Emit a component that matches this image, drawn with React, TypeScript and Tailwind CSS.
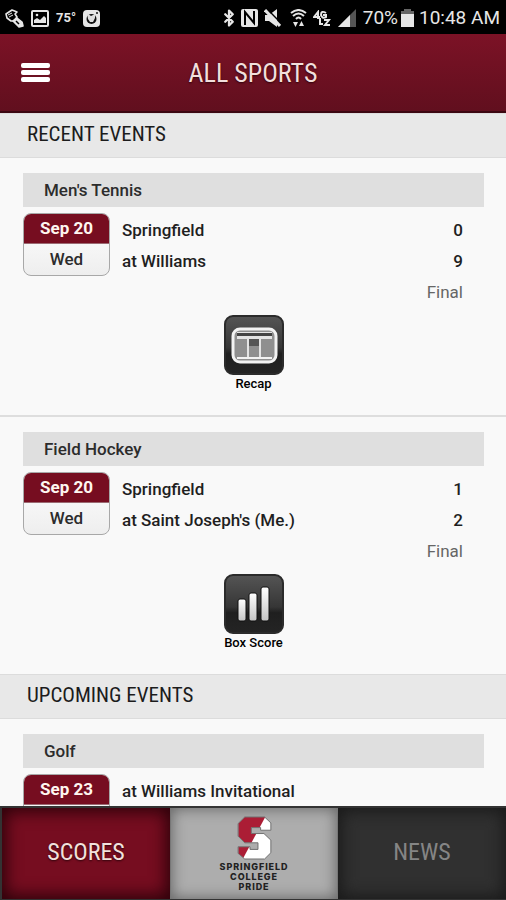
import React from 'react';
import { Bluetooth } from 'lucide-react';

type GameEvent = {
  sport: string;
  date: string;
  day?: string;
  rows: { team: string; score?: string }[];
  status?: string;
  action?: 'Recap' | 'Box Score';
};

const recent: GameEvent[] = [
  {
    sport: "Men's Tennis",
    date: 'Sep 20',
    day: 'Wed',
    rows: [
      { team: 'Springfield', score: '0' },
      { team: 'at Williams', score: '9' },
    ],
    status: 'Final',
    action: 'Recap',
  },
  {
    sport: 'Field Hockey',
    date: 'Sep 20',
    day: 'Wed',
    rows: [
      { team: 'Springfield', score: '1' },
      { team: "at Saint Joseph's (Me.)", score: '2' },
    ],
    status: 'Final',
    action: 'Box Score',
  },
];

const upcoming: GameEvent[] = [
  { sport: 'Golf', date: 'Sep 23', rows: [{ team: 'at Williams Invitational' }] },
];

const condensed = "font-['Roboto_Condensed','Liberation_Sans_Narrow',sans-serif]";

function StatusBar() {
  return (
    <div className="flex h-[34px] shrink-0 items-center justify-between bg-black pt-[2px] pr-[6px] pl-[5px] text-[#e6e6e6]">
      <div className="flex items-center gap-[7px]">
        <svg width="19" height="19" viewBox="0 0 19 19" fill="none" stroke="currentColor" strokeWidth="1.6" strokeLinejoin="round">
          <path d="M1 5 L7 1 L12 3 L10 5 L12 8 L9 12 L6 12 L2 9 Z" />
          <path d="M3 6 L7 4 M4 8 L8 6" strokeWidth="1" />
          <path d="M8 12 L12 9 L17 13 L18 17 L14 18 Z" fill="currentColor" />
          <path d="M11 12 L14 15" stroke="#000" strokeWidth="1.500" />
        </svg>
        <svg width="18" height="17" viewBox="0 0 18 17" fill="none" stroke="currentColor" strokeWidth="2">
          <rect x="1" y="1" width="16" height="15" rx="1" />
          <path d="M3 13 V10 L6 8 L9 10 L13 6 L15 8 V13 Z" fill="currentColor" stroke="none" />
          <circle cx="6" cy="5" r="1.3" fill="currentColor" stroke="none" />
        </svg>
        <span className="font-[Roboto] text-[13px] leading-4 font-bold">75°</span>
        <svg width="17" height="17" viewBox="0 0 17 17">
          <rect width="17" height="17" rx="4" fill="currentColor" />
          <circle cx="8.500" cy="9" r="5" fill="#111" />
          <path d="M4 3 L8 6 L12 4 L12 8 L10 12 H7 L5 9 Z" fill="#ddd" />
          <circle cx="14" cy="3" r="1" fill="#111" />
        </svg>
      </div>
      <div className="flex items-center">
        <Bluetooth size={18} strokeWidth={3} />
        <svg className="ml-[3px]" width="17" height="18" viewBox="0 0 17 18">
          <rect width="17" height="18" rx="2" fill="currentColor" />
          <path d="M4 16 V3 L13 14 V2" fill="none" stroke="#000" strokeWidth="2" />
        </svg>
        <svg className="ml-[6px]" width="17" height="18" viewBox="0 0 17 18">
          <path d="M1 6 H5 L13 0 V18 L5 12 H1 Z" fill="currentColor" />
          <path d="M3 0 L17 14" stroke="#000" strokeWidth="1.500" />
          <path d="M1 1 L16 17" stroke="currentColor" strokeWidth="3" />
        </svg>
        <svg className="ml-[9px]" width="17" height="18" viewBox="0 0 17 18" fill="none" stroke="currentColor" strokeWidth="2">
          <path d="M1 4 Q8.500 -2 16 4" />
          <path d="M3 7 Q8.500 2 14 7" />
          <path d="M6 10 Q8.500 7 11 10" />
          <path d="M3 13 L5.500 18 L8 13 Z M9 17 L11.500 12 L14 17 Z" fill="currentColor" stroke="none" />
        </svg>
        <svg className="ml-[6px]" width="18" height="16" viewBox="0 0 18 16" fill="none" stroke="currentColor" strokeWidth="2">
          <path d="M5 9 V2 L1 7 H7 M13 3 Q8 0 8 5 Q9 9 13 7 V5 H10" />
          <path d="M7 8 V14 H10 M11 10 H16 L12 15 H17" />
        </svg>
        <svg className="ml-[7px]" width="18" height="18" viewBox="0 0 18 18">
          <path d="M0 18 L18 0 V18 Z" fill="#555" />
          <path d="M0 18 L12 6 V18 Z" fill="currentColor" />
        </svg>
        <span className="ml-[7px] font-[Roboto] text-[19px] leading-6">70%</span>
        <svg className="ml-[3px]" width="13" height="18" viewBox="0 0 13 18">
          <path d="M3 0 H10 V2 H13 V5 H0 V2 H3 Z" fill="#666" />
          <rect y="5" width="13" height="13" fill="currentColor" />
        </svg>
        <span className="ml-[5px] font-[Roboto] text-[19px] leading-6 whitespace-nowrap">10:48 AM</span>
      </div>
    </div>
  );
}

function SectionTitle({ children }: { children: React.ReactNode }) {
  return (
    <h2
      className={`${condensed} h-[45px] border-y border-[#dcdcdc] bg-[#e8e8e8] pl-[27px] text-[21px] leading-[40px] text-[#1c1c1c]`}
    >
      {children}
    </h2>
  );
}

function ActionIcon({ kind }: { kind: 'Recap' | 'Box Score' }) {
  return (
    <svg width="60" height="60" viewBox="0 0 60 60">
      <defs>
        <linearGradient id="tile" x1="0" y1="0" x2="0" y2="1">
          <stop offset="0" stopColor="#555" />
          <stop offset="0.550" stopColor="#363636" />
          <stop offset="0.650" stopColor="#1f1f1f" />
          <stop offset="1" stopColor="#242424" />
        </linearGradient>
        <linearGradient id="glyph" x1="0" y1="0" x2="0" y2="1">
          <stop offset="0" stopColor="#fff" />
          <stop offset="1" stopColor="#c4c4c4" />
        </linearGradient>
      </defs>
      <rect x="1" y="1" width="58" height="58" rx="8" fill="url(#tile)" stroke="#2b2b2b" strokeWidth="2" />
      {kind === 'Recap' ? (
        <g>
          <rect x="9" y="14" width="43" height="33" rx="7" fill="#8f8f8f" stroke="#f2f2f2" strokeWidth="3" />
          <path d="M13 17 H48 V24 H13 Z M23 20 H25 V43 H23 Z M35 20 H37 V43 H35 Z" fill="#e4e4e4" />
          <rect x="13" y="18" width="35" height="3" fill="#444" />
          <rect x="25" y="24" width="10" height="7" fill="#555" />
          <path d="M13 43 H48" stroke="#f2f2f2" strokeWidth="2" />
        </g>
      ) : (
        <g fill="url(#glyph)" stroke="#111">
          <rect x="14" y="25" width="8" height="22" rx="2" />
          <rect x="25" y="19" width="8" height="28" rx="2" />
          <rect x="37" y="13" width="8" height="34" rx="2" />
        </g>
      )}
    </svg>
  );
}

function EventCard({ event }: { event: GameEvent }) {
  return (
    <article className="pt-[15px] pr-[22px] pl-[23px]">
      <h3 className="h-[34px] bg-[#dfdfdf] pl-[21px] text-[17px] leading-[34px] font-medium text-[#2c2c2c]">
        {event.sport}
      </h3>
      <div className="flex items-start gap-[12px] pt-[6px]">
        <time className="block h-[63px] w-[87px] shrink-0 overflow-hidden rounded-[8px] border border-[#a8a8a8] bg-linear-to-b from-white to-[#eeeeee] text-center">
          <span className="block h-[30px] border-b border-[#9b6a72] bg-[#760d20] text-[17px] leading-[28px] font-bold text-[#fff6f0]">
            {event.date}
          </span>
          {event.day && (
            <span className="block text-[17px] leading-[30px] font-medium text-[#2c2c2c]">{event.day}</span>
          )}
        </time>
        <table className="mt-[2px] w-full border-collapse text-[17px] leading-[31px] text-[#1f1f1f]">
          <tbody>
            {event.rows.map((row) => (
              <tr key={row.team}>
                <th scope="row" className="p-0 text-left font-medium">{row.team}</th>
                <td className="p-0 pr-[21px] text-right font-medium">{row.score}</td>
              </tr>
            ))}
            {event.status && (
              <tr>
                <td colSpan={2} className="p-0 pr-[21px] text-right text-[#666666]">{event.status}</td>
              </tr>
            )}
          </tbody>
        </table>
      </div>
      {event.action && (
        <div className="flex h-[107px] justify-center pt-[7px]">
          <button type="button" className="flex flex-col items-center self-start text-[13px] leading-[18px] font-medium text-black">
            <ActionIcon kind={event.action} />
            {event.action}
          </button>
        </div>
      )}
    </article>
  );
}

function CollegeLogo() {
  return (
    <svg width="35" height="44" viewBox="-3 -3 105 133" aria-hidden="true">
      <defs>
        <clipPath id="s-shape">
          <path d="M20 0 H80 L99 18 V40 H68 V32 H40 V50 H78 L99 70 V108 L80 127 H20 L0 110 V90 H36 V98 H60 V78 H20 L0 58 V20 Z" />
        </clipPath>
      </defs>
      <g clipPath="url(#s-shape)">
        <rect width="99" height="127" fill="#fff" />
        <path d="M0 0 H82 L14 127 H0 Z" fill="#ab1d35" />
      </g>
      <path
        d="M20 0 H80 L99 18 V40 H68 V32 H40 V50 H78 L99 70 V108 L80 127 H20 L0 110 V90 H36 V98 H60 V78 H20 L0 58 V20 Z"
        fill="none"
        stroke="#707070"
        strokeWidth="3"
      />
    </svg>
  );
}

export default function App() {
  return (
    <div className="flex h-screen flex-col overflow-hidden bg-[#f9f9f9] font-[Roboto,sans-serif]">
      <StatusBar />
      <header className="grid h-[79px] shrink-0 grid-cols-[1fr_auto_1fr] items-center border-b-2 border-[#3c0711] bg-linear-to-b from-[#7c1226] to-[#610f1e] px-[21px]">
        <button type="button" aria-label="Menu" className="flex w-[29px] flex-col gap-[2px]">
          <span className="h-[5px] w-full rounded-[2px] bg-white" />
          <span className="h-[5px] w-full rounded-[2px] bg-white" />
          <span className="h-[5px] w-full rounded-[2px] bg-white" />
        </button>
        <h1 className={`${condensed} text-[26px] leading-[32px] text-[#f2dfdc] [text-shadow:0_1px_2px_#30040c]`}>ALL SPORTS</h1>
      </header>
      <main className="min-h-0 flex-1 overflow-hidden">
        <SectionTitle>RECENT EVENTS</SectionTitle>
        <div className="divide-y-2 divide-[#dedede]">
          {recent.map((event) => (
            <EventCard key={event.sport} event={event} />
          ))}
        </div>
        <SectionTitle>UPCOMING EVENTS</SectionTitle>
        {upcoming.map((event) => (
          <EventCard key={event.sport} event={event} />
        ))}
      </main>
      <nav className="grid h-[94px] shrink-0 grid-cols-3 border-t-2 border-b border-l-2 border-[#333333] bg-[#222222]">
        <button
          type="button"
          className={`${condensed} bg-[#760d20] pb-[4px] text-[24px] text-[#f2e1dc] shadow-[inset_0_0_16px_4px_#2d020a] [text-shadow:0_1px_2px_#30040c]`}
        >
          SCORES
        </button>
        <button
          type="button"
          className="flex flex-col items-center border-x border-[#777777] bg-[#adadad] pt-[8px] font-[Inter,sans-serif] text-[9px] leading-[10px] font-extrabold tracking-widest text-[#222222] shadow-[inset_0_0_14px_1px_#666666]"
        >
          <CollegeLogo />
          <span className="pt-[2px]">SPRINGFIELD</span>
          <span>COLLEGE</span>
          <span>PRIDE</span>
        </button>
        <button type="button" className={`${condensed} bg-[#303030] pb-[4px] text-[24px] text-[#858585] shadow-[inset_0_0_16px_3px_#191919]`}>
          NEWS
        </button>
      </nav>
    </div>
  );
}
